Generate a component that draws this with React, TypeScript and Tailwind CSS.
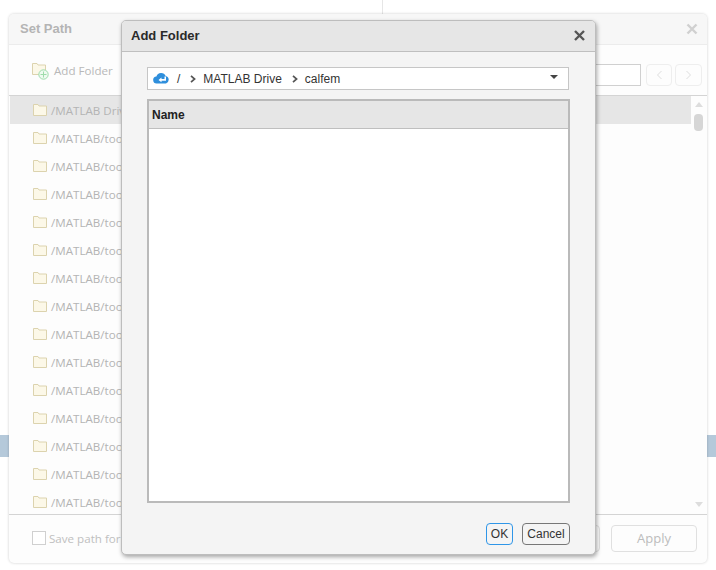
const Folder = ({ className = "" }: { className?: string }) => (
  <svg width="14" height="12" viewBox="0 0 14 12" className={className}>
    <path d="M.5 11.5V.5h4.5l1 1.5h7.5v9.5z" fill="#fcf8e8" stroke="#dcd3ae" />
  </svg>
);

const Chevron = () => (
  <svg width="6" height="8" viewBox="0 0 6 8" className="shrink-0">
    <path d="M1 .8 4.6 4 1 7.2" fill="none" stroke="#555" strokeWidth="1.7" />
  </svg>
);

const rows = ["/MATLAB Drive", ...Array(14).fill("/MATLAB/toolbox")];

export default function App() {
  return (
    <div className="relative w-[716px] h-[570px] overflow-hidden bg-white font-['Liberation_Sans',sans-serif]">
      <div className="absolute left-[382px] top-0 w-px h-[14px] bg-[#e6e6e6]" />
      <div className="absolute left-0 top-[435px] w-full h-[22px] bg-[#b5c9da]" />

      {/* Set Path dialog */}
      <div className="absolute left-[9px] top-[14px] w-[698px] h-[549px] flex flex-col bg-[#fdfdfd] rounded-[5px] shadow-[0_0_3px_rgba(0,0,0,0.2)]">
        <div className="h-[31px] shrink-0 flex items-center justify-between pl-[11px] pr-[9px] bg-[#f7f7f7] border-b border-[#ececec] rounded-t-[5px]">
          <span className="text-[13px] font-bold text-[#b4b4b4]">Set Path</span>
          <svg width="12" height="12" viewBox="0 0 12 12">
            <path d="M1.5 1.5l9 9m0-9-9 9" stroke="#d0d0d0" strokeWidth="2.4" />
          </svg>
        </div>
        <div className="h-[51px] shrink-0 flex justify-between pl-[23px] pr-[5px] border-b border-[#d4d4d4]">
          <div className="relative flex items-center gap-[6px] pt-[1px]">
            <div className="relative w-[16px] h-[16px]">
              <Folder className="absolute left-0 top-0" />
              <svg width="11" height="11" viewBox="0 0 11 11" className="absolute left-[6px] top-[6px]">
                <circle cx="5.5" cy="5.5" r="4.7" fill="#eefaf0" stroke="#9ddcaa" />
                <path d="M5.5 2.5v6m-3-3h6" stroke="#9ddcaa" />
              </svg>
            </div>
            <span className="text-[11.6px] text-[#b8b8b8] font-['Open_Sans',sans-serif]">Add Folder</span>
          </div>
          <div className="flex items-center self-end mb-[9px]">
            <div className="w-[60px] h-[22px] border border-[#d0d0d0] bg-white mr-[5px]" />
            <div className="w-[26px] h-[22px] border border-[#eeeeee] rounded-[4px] flex items-center justify-center mr-[3px]">
              <svg width="7" height="10" viewBox="0 0 7 10"><path d="M5.5 1 1.5 5l4 4" fill="none" stroke="#dedede" /></svg>
            </div>
            <div className="w-[27px] h-[22px] border border-[#eeeeee] rounded-[4px] flex items-center justify-center">
              <svg width="7" height="10" viewBox="0 0 7 10"><path d="M1.5 1l4 4-4 4" fill="none" stroke="#dedede" /></svg>
            </div>
          </div>
        </div>
        <div className="flex-1 min-h-0 flex border-b border-[#d4d4d4]">
          <div className="flex-1 min-w-0 overflow-hidden pl-px">
            {rows.map((r, i) => (
              <div
                key={i}
                className={`h-[28px] flex items-center pl-[23px] gap-[4px] text-[11.6px] text-[#b4b4b4] font-['Open_Sans',sans-serif] ${i === 0 ? "bg-[#e6e6e6]" : ""}`}
              >
                <Folder />
                <span className="pt-[1px]">{r}</span>
              </div>
            ))}
          </div>
          <div className="w-[16px] shrink-0 flex flex-col items-center pt-[6px] pr-px">
            <div className="w-0 h-0 border-x-[4.5px] border-x-transparent border-b-[5px] border-b-[#dddddd]" />
            <div className="w-[9px] h-[17px] rounded-[4px] bg-[#d6d6d6] mt-[7px]" />
            <div className="flex-1" />
            <div className="w-0 h-0 border-x-[4.5px] border-x-transparent border-t-[5px] border-t-[#dddddd] mb-[7px]" />
          </div>
        </div>
        <div className="h-[48px] shrink-0 flex items-center justify-between pl-[23px] pr-[10px] pb-[1px]">
          <div className="flex items-center gap-[3px] text-[11.6px] text-[#c0c0c0] font-['Open_Sans',sans-serif]">
            <div className="w-[14px] h-[14px] border border-[#d0d0d0] bg-white" />
            <span>Save path for</span>
          </div>
          <div className="flex gap-[11px] text-[13px] text-[#bcbcbc] font-['Open_Sans',sans-serif]">
            <div className="w-[86px] h-[27px] border border-[#e0e0e0] rounded-[4px]" />
            <div className="w-[86px] h-[27px] border border-[#e0e0e0] rounded-[4px] flex items-center justify-center">
              Apply
            </div>
          </div>
        </div>
      </div>

      {/* Add Folder modal */}
      <div className="absolute left-[121px] top-[20px] w-[475px] h-[535px] flex flex-col bg-[#f4f4f4] border border-[#bdbdbd] rounded-[5px] shadow-[1px_2px_4px_rgba(0,0,0,0.35)]">
        <div className="h-[31px] shrink-0 flex items-center justify-between pl-[9px] pr-[10px] pb-[1px] bg-[#e6e6e6] border-b border-[#bfbfbf] rounded-t-[4px]">
          <span className="text-[13px] font-bold text-[#2a2a2a]">Add Folder</span>
          <svg width="11" height="11" viewBox="0 0 11 11">
            <path d="M1 1l9 9m0-9-9 9" stroke="#555" strokeWidth="2.4" />
          </svg>
        </div>
        <div className="flex-1 min-h-0 flex flex-col pt-[15px] pl-[25px] pr-[26px]">
          <div className="h-[23px] shrink-0 flex items-center bg-white border border-[#c6c6c6] pl-[5px] pr-[10px] text-[12px] text-[#333]">
            <svg width="17" height="11" viewBox="0 0 17 11" className="shrink-0">
              <path d="M4 10.5a3.5 3.5 0 0 1-.6-7A5 5 0 0 1 12.7 3a3.9 3.9 0 0 1 .3 7.5z" fill="#2f8fdc" />
              <path d="M11.5 3.5v2.5H8.5V4.5L5.5 7l3 2.2V7.7h4.5V3.5z" fill="#fff" />
            </svg>
            <span className="ml-[7px] pt-[1px]">/</span>
            <span className="ml-[10px] flex pt-[1px]"><Chevron /></span>
            <span className="ml-[7px] pt-[1px]">MATLAB Drive</span>
            <span className="ml-[10px] flex pt-[1px]"><Chevron /></span>
            <span className="ml-[7px] pt-[1px]">calfem</span>
            <div className="flex-1" />
            <div className="w-0 h-0 border-x-[4px] border-x-transparent border-t-[4px] border-t-[#444] mb-[4px]" />
          </div>
          <div className="mt-[9px] h-[404px] shrink-0 -mr-px flex flex-col bg-white border-2 border-[#bababa]">
            <div className="h-[28px] shrink-0 flex items-center pl-[3px] bg-[#e6e6e6] border-b border-[#bfbfbf] text-[12px] font-bold text-[#222]">
              Name
            </div>
          </div>
          <div className="flex justify-end gap-[9px] mt-[20px] -mr-px">
            <div className="w-[27px] h-[22px] flex items-center justify-center border border-[#2f96e8] rounded-[4px] text-[12px] text-[#333]">OK</div>
            <div className="w-[48px] h-[22px] flex items-center justify-center border border-[#777] rounded-[4px] text-[12px] text-[#333]">Cancel</div>
          </div>
        </div>
      </div>
    </div>
  );
}
